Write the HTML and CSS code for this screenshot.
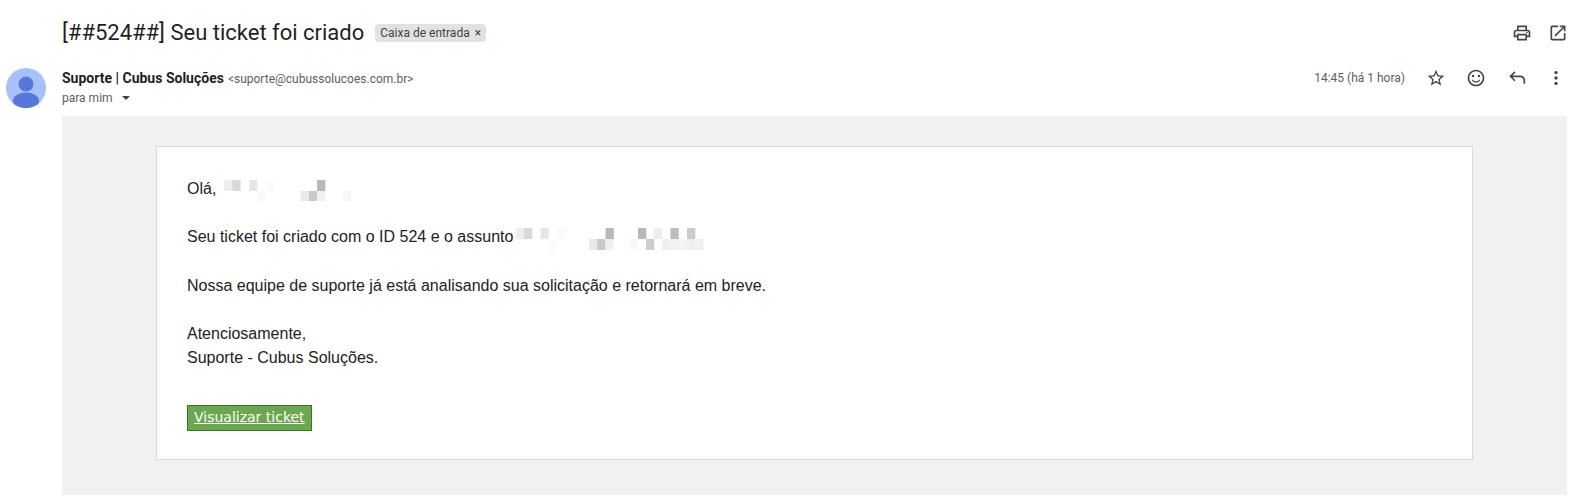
FILE: index.html
```html
<!DOCTYPE html>
<html lang="pt-BR">
<head>
  <meta charset="UTF-8">
  <meta name="viewport" content="width=device-width, initial-scale=1">
  <title>[##524##] Seu ticket foi criado</title>
  <link rel="stylesheet" href="styles.css">
</head>
<body>

  <div class="subject-row">
    <h1 class="subject">[##524##] Seu ticket foi criado</h1>
    <span class="chip">Caixa de entrada <span class="chip-x">×</span></span>
    <div class="subject-actions">
      <button class="icon-btn icon-btn-top" aria-label="Imprimir">
        <svg viewBox="0 0 24 24" width="20" height="20"><path d="M19 8h-1V3H6v5H5c-1.66 0-3 1.34-3 3v6h4v4h12v-4h4v-6c0-1.66-1.34-3-3-3zM8 5h8v3H8V5zm8 12v2H8v-4h8v2zm2-2v-2H6v2H4v-4c0-.55.45-1 1-1h14c.55 0 1 .45 1 1v4h-2z"/><circle cx="18" cy="11.5" r="1"/></svg>
      </button>
      <button class="icon-btn icon-btn-top" aria-label="Abrir em nova janela">
        <svg viewBox="0 0 24 24" width="20" height="20"><path d="M19 19H5V5h7V3H5a2 2 0 0 0-2 2v14a2 2 0 0 0 2 2h14c1.1 0 2-.9 2-2v-7h-2v7zM14 3v2h3.59l-9.83 9.83 1.41 1.41L19 6.41V10h2V3h-7z"/></svg>
      </button>
    </div>
  </div>

  <div class="sender-row">
    <svg class="avatar" viewBox="0 0 40 40" width="40" height="40">
      <defs><clipPath id="avatarClip"><circle cx="20" cy="20" r="20"/></clipPath></defs>
      <circle cx="20" cy="20" r="20" fill="#a8c1fb"/>
      <g clip-path="url(#avatarClip)" fill="#5677dc">
        <circle cx="20" cy="16" r="7.5"/>
        <ellipse cx="20" cy="33" rx="13" ry="8.5"/>
      </g>
    </svg>
    <div class="sender-info">
      <div class="sender-line">
        <span class="sender-name">Suporte | Cubus Soluções</span>
        <span class="sender-mail">&lt;suporte@cubussolucoes.com.br&gt;</span>
      </div>
      <div class="to-line">para mim <span class="caret"></span></div>
    </div>
    <div class="sender-actions">
      <span class="mail-time">14:45 (há 1 hora)</span>
      <button class="icon-btn" aria-label="Estrela">
        <svg viewBox="0 0 24 24" width="20" height="20"><path d="M22 9.24l-7.19-.62L12 2 9.19 8.63 2 9.24l5.46 4.73L5.82 21 12 17.27 18.18 21l-1.63-7.03L22 9.24zM12 15.4l-3.76 2.27 1-4.28-3.32-2.88 4.38-.38L12 6.1l1.71 4.04 4.38.38-3.32 2.88 1 4.28L12 15.4z"/></svg>
      </button>
      <button class="icon-btn" aria-label="Reagir">
        <svg viewBox="0 0 24 24" width="20" height="20"><path d="M11.99 2C6.47 2 2 6.48 2 12s4.47 10 9.99 10C17.52 22 22 17.52 22 12S17.52 2 11.99 2zM12 20c-4.42 0-8-3.58-8-8s3.58-8 8-8 8 3.58 8 8-3.58 8-8 8z"/><circle cx="15.5" cy="9.5" r="1.5"/><circle cx="8.5" cy="9.5" r="1.5"/><path d="M12 16c-1.48 0-2.75-.81-3.45-2H6.88c.8 2.05 2.79 3.5 5.12 3.5s4.32-1.45 5.12-3.5h-1.67c-.7 1.19-1.97 2-3.45 2z"/></svg>
      </button>
      <button class="icon-btn" aria-label="Responder">
        <svg viewBox="0 0 24 24" width="20" height="20"><path d="M21 19v-4c0-2.2-1.8-4-4-4H7.83l3.58 3.59L10 16l-6-6 6-6 1.41 1.41L7.83 9H17c3.31 0 6 2.69 6 6v4h-2z"/></svg>
      </button>
      <button class="icon-btn" aria-label="Mais">
        <svg viewBox="0 0 24 24" width="20" height="20"><circle cx="12" cy="5.5" r="2"/><circle cx="12" cy="12" r="2"/><circle cx="12" cy="18.5" r="2"/></svg>
      </button>
    </div>
  </div>

  <div class="mail-panel">
    <div class="mail-card">
      <p>Olá,<svg class="pixels pixels-name" viewBox="0 0 135 21" width="135" height="21">
        <rect x="0" y="0" width="8.3" height="11" fill="#eee"/>
        <rect x="8.3" y="0" width="8.3" height="11" fill="#d8d8d8"/>
        <rect x="25" y="0" width="8.3" height="11" fill="#e6e6e6"/>
        <rect x="42" y="0" width="8.3" height="11" fill="#fafafa"/>
        <rect x="93" y="0" width="8.3" height="11" fill="#b9b9b9"/>
        <rect x="33.5" y="11" width="8.3" height="10" fill="#fafafa"/>
        <rect x="76.5" y="11" width="8.3" height="10" fill="#e9e9e9"/>
        <rect x="85" y="11" width="8.3" height="10" fill="#c9c9c9"/>
        <rect x="93" y="11" width="8.3" height="10" fill="#f0f0f0"/>
        <rect x="119" y="11" width="8.3" height="10" fill="#f6f6f6"/>
      </svg></p>
      <p>Seu ticket foi criado com o ID 524 e o assunto<svg class="pixels pixels-subject" viewBox="0 0 190 22" width="190" height="22">
        <rect x="0" y="0" width="8.3" height="11" fill="#eee"/>
        <rect x="8" y="0" width="8.3" height="11" fill="#d8d8d8"/>
        <rect x="24.5" y="0" width="8.3" height="11" fill="#e6e6e6"/>
        <rect x="41" y="0" width="8.3" height="11" fill="#fafafa"/>
        <rect x="89.5" y="0" width="8.3" height="11" fill="#b9b9b9"/>
        <rect x="122" y="0" width="8.3" height="11" fill="#b9b9b9"/>
        <rect x="138" y="0" width="8.3" height="11" fill="#eee"/>
        <rect x="154.5" y="0" width="8.3" height="11" fill="#bcbcbc"/>
        <rect x="171" y="0" width="8.3" height="11" fill="#cdcdcd"/>
        <rect x="32.8" y="11" width="8.3" height="11" fill="#fafafa"/>
        <rect x="73" y="11" width="8.3" height="11" fill="#e9e9e9"/>
        <rect x="81.2" y="11" width="8.3" height="11" fill="#c9c9c9"/>
        <rect x="89.5" y="11" width="8.3" height="11" fill="#f0f0f0"/>
        <rect x="114" y="11" width="8.3" height="11" fill="#f8f8f8"/>
        <rect x="130" y="11" width="8.3" height="11" fill="#cdcdcd"/>
        <rect x="146" y="11" width="8.3" height="11" fill="#eee"/>
        <rect x="154.3" y="11" width="8.3" height="11" fill="#f1f1f1"/>
        <rect x="162.6" y="11" width="8.3" height="11" fill="#f4f4f4"/>
        <rect x="171" y="11" width="8.3" height="11" fill="#f0f0f0"/>
        <rect x="179.3" y="11" width="8.3" height="11" fill="#f0f0f0"/>
      </svg></p>
      <p>Nossa equipe de suporte já está analisando sua solicitação e retornará em breve.</p>
      <p>Atenciosamente,<br>Suporte - Cubus Soluções.</p>
      <a class="ticket-btn" href="#">Visualizar ticket</a>
    </div>
  </div>

</body>
</html>
```

FILE: styles.css
```css
body {
  margin: 0;
  padding: 0;
  background: #fff;
  font-family: Roboto, "Liberation Sans", sans-serif;
  color: #1f1f1f;
}

/* top line with subject */
.subject-row {
  display: flex;
  align-items: center;
  height: 34px;
  padding: 16px 19px 0 62px;
}

.subject {
  margin: 0;
  font-size: 22px;
  font-weight: 400;
  line-height: 28px;
}

.chip {
  margin-left: 11px;
  padding: 0 5px;
  height: 18px;
  line-height: 18px;
  font-size: 12px;
  color: #444;
  background: #e1e3e1;
  border-radius: 4px;
}

.chip-x {
  margin-left: 2px;
}

.subject-actions {
  display: flex;
  margin-left: auto;
}

.icon-btn {
  display: flex;
  align-items: center;
  justify-content: center;
  width: 40px;
  height: 40px;
  padding: 0;
  border: 0;
  background: none;
  fill: #444746;
}

.icon-btn-top {
  width: 36px;
  margin-left: 0;
}

/* sender */
.sender-row {
  display: flex;
  align-items: flex-start;
  height: 66px;
  padding: 18px 19px 0 6px;
  box-sizing: border-box;
}

.avatar {
  flex-shrink: 0;
}

.sender-info {
  margin-left: 16px;
}

.sender-line {
  height: 20px;
  line-height: 20px;
  white-space: nowrap;
}

.sender-name {
  font-size: 14px;
  font-weight: 700;
}

.sender-mail {
  font-size: 12px;
  color: #5e5e5e;
}

.to-line {
  height: 20px;
  line-height: 20px;
  font-size: 12px;
  color: #5e5e5e;
}

.caret {
  display: inline-block;
  margin-left: 6px;
  vertical-align: 2px;
  border-top: 4px solid #444;
  border-left: 4px solid transparent;
  border-right: 4px solid transparent;
}

.sender-actions {
  display: flex;
  align-items: center;
  height: 20px;
  margin-left: auto;
}

.mail-time {
  margin-right: 11px;
  font-size: 12px;
  color: #5e5e5e;
}

/* message */
.mail-panel {
  width: 1505px;
  height: 379px;
  margin-left: 62px;
  padding: 30px 94px 0;
  box-sizing: border-box;
  background: #f1f1f1;
}

.mail-card {
  height: 314px;
  padding: 30px;
  box-sizing: border-box;
  background: #fff;
  border: 1px solid #d9d9d9;
  font-family: "Liberation Sans", Arial, sans-serif;
  font-size: 16px;
  line-height: 24px;
  color: #222;
}

.mail-card p {
  margin: 0 0 24px;
}

.pixels {
  vertical-align: top;
  margin-top: 3px;
}

.pixels-name {
  margin-left: 8px;
}

.pixels-subject {
  margin-left: 3px;
}

.ticket-btn {
  display: inline-block;
  margin-top: 11px;
  padding: 0 6px;
  height: 24px;
  line-height: 22px;
  background: #6aa84f;
  border: 1px solid #38761d;
  font-family: "DejaVu Sans", Verdana, sans-serif;
  font-size: 14px;
  color: #fff;
}
```
